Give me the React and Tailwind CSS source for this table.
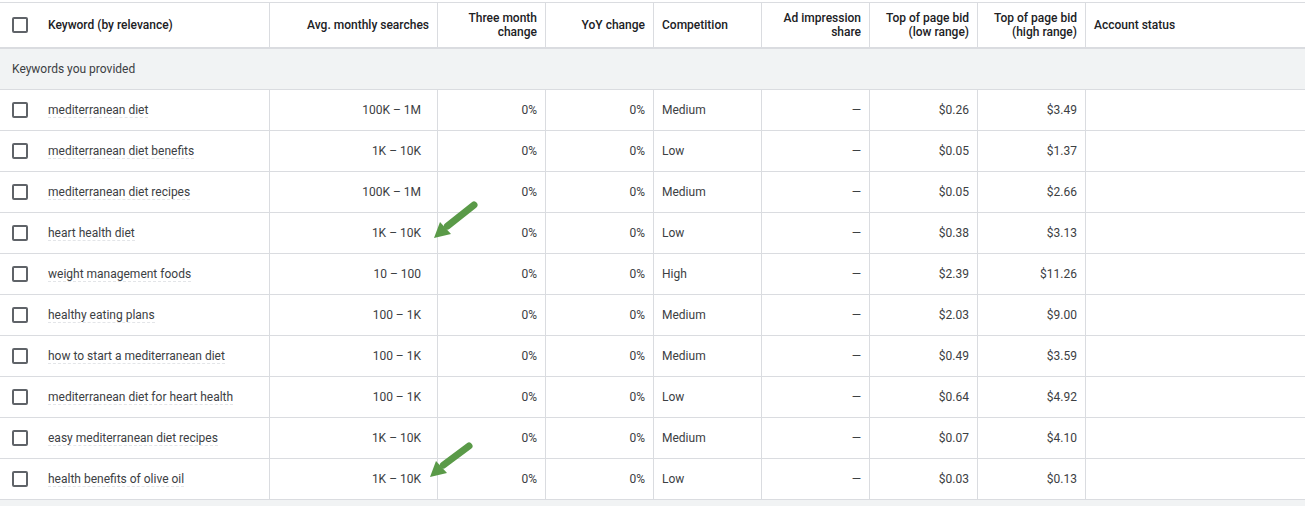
import React from "react";

const rows = [
  ["mediterranean diet", "100K – 1M", "Medium", "$0.26", "$3.49"],
  ["mediterranean diet benefits", "1K – 10K", "Low", "$0.05", "$1.37"],
  ["mediterranean diet recipes", "100K – 1M", "Medium", "$0.05", "$2.66"],
  ["heart health diet", "1K – 10K", "Low", "$0.38", "$3.13"],
  ["weight management foods", "10 – 100", "High", "$2.39", "$11.26"],
  ["healthy eating plans", "100 – 1K", "Medium", "$2.03", "$9.00"],
  ["how to start a mediterranean diet", "100 – 1K", "Medium", "$0.49", "$3.59"],
  ["mediterranean diet for heart health", "100 – 1K", "Low", "$0.64", "$4.92"],
  ["easy mediterranean diet recipes", "1K – 10K", "Medium", "$0.07", "$4.10"],
  ["health benefits of olive oil", "1K – 10K", "Low", "$0.03", "$0.13"],
];

const grid = "grid grid-cols-[270px_168px_108px_108px_108px_108px_108px_108px_1fr]";

function Box() {
  return <div className="w-4 h-4 rounded-[2px] border-2 border-[#5f6368] shrink-0" />;
}

function Arrow({ x1, y1, tip, c1, c2 }) {
  return (
    <g>
      <line x1={x1} y1={y1} x2={(c1[0] + c2[0]) / 2 + 2} y2={(c1[1] + c2[1]) / 2 - 2} stroke="#5a9a48" strokeWidth="7" strokeLinecap="round" />
      <polygon points={`${tip[0]},${tip[1]} ${c1[0]},${c1[1]} ${c2[0]},${c2[1]}`} fill="#5a9a48" />
    </g>
  );
}

export default function App() {
  return (
    <div className="relative w-[1305px] h-[506px] bg-white overflow-hidden text-[12px] text-[#3c4043]" style={{ fontFamily: "Roboto, 'Liberation Sans', sans-serif" }}>
      <div className="pt-[2px]">
        {/* header */}
        <div className={`${grid} border-t border-[#dadce0] border-b-2 h-[47px] font-medium text-[#202124] leading-[14px]`}>
          <div className="flex items-center border-r border-[#dadce0] pl-3">
            <Box />
            <span className="ml-5">Keyword (by relevance)</span>
          </div>
          <div className="flex items-center justify-end text-right border-r border-[#dadce0] pr-2">Avg. monthly searches</div>
          <div className="flex items-center justify-end text-right border-r border-[#dadce0] pr-2">Three month<br />change</div>
          <div className="flex items-center justify-end text-right border-r border-[#dadce0] pr-2">YoY change</div>
          <div className="flex items-center border-r border-[#dadce0] pl-2">Competition</div>
          <div className="flex items-center justify-end text-right border-r border-[#dadce0] pr-2">Ad impression<br />share</div>
          <div className="flex items-center justify-end text-right border-r border-[#dadce0] pr-2">Top of page bid<br />(low range)</div>
          <div className="flex items-center justify-end text-right border-r border-[#dadce0] pr-2">Top of page bid<br />(high range)</div>
          <div className="flex items-center pl-2">Account status</div>
        </div>
        {/* group row */}
        <div className="h-[41px] bg-[#f1f3f4] border-b border-[#dadce0] flex items-center pl-3">Keywords you provided</div>
        {rows.map((r, i) => (
          <div key={i} className={`${grid} h-[41px] border-b border-[#dadce0]`}>
            <div className="flex items-center border-r border-[#dadce0] pl-3">
              <Box />
              <span className="ml-5 pt-px border-b border-dashed border-[#e3e5e8] leading-[14px]">{r[0]}</span>
            </div>
            <div className="flex items-center justify-end border-r border-[#dadce0] pr-4">{r[1]}</div>
            <div className="flex items-center justify-end border-r border-[#dadce0] pr-2">0%</div>
            <div className="flex items-center justify-end border-r border-[#dadce0] pr-2">0%</div>
            <div className="flex items-center border-r border-[#dadce0] pl-2">{r[2]}</div>
            <div className="flex items-center justify-end border-r border-[#dadce0] pr-2">—</div>
            <div className="flex items-center justify-end border-r border-[#dadce0] pr-2">{r[3]}</div>
            <div className="flex items-center justify-end border-r border-[#dadce0] pr-2">{r[4]}</div>
            <div />
          </div>
        ))}
        <div className="h-[10px] bg-[#f1f3f4]" />
      </div>
      <svg className="absolute left-0 top-0 pointer-events-none" width="1305" height="506">
        <Arrow x1={474} y1={205} tip={[434, 238]} c1={[440, 222]} c2={[451, 234]} />
        <Arrow x1={469} y1={446} tip={[430, 477]} c1={[436, 461]} c2={[447, 473]} />
      </svg>
    </div>
  );
}
